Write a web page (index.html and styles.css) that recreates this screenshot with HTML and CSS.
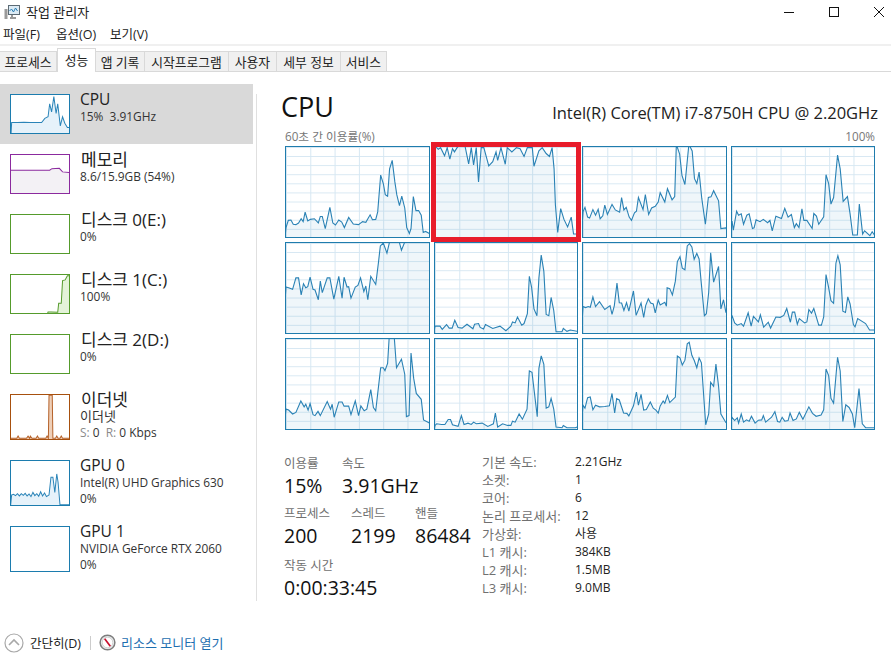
FILE: index.html
```html
<!DOCTYPE html>
<html lang="ko">
<head>
<meta charset="utf-8">
<title>작업 관리자</title>
<link rel="stylesheet" href="styles.css">
</head>
<body>
<div class="app">
  <header class="titlebar">
    <svg class="app-icon" viewBox="0 0 16 16"><rect x="0.5" y="5" width="3" height="10" fill="#9a9a9a"/><rect x="4.5" y="1.5" width="11" height="9" fill="#dcebf5" stroke="#5c6b75"/><path d="M5.5 7l2-2 2 3 2-4 2 3" fill="none" stroke="#2a7fb5"/><path d="M8 11v2M6 14h6" stroke="#7a7a7a" stroke-width="1.5"/></svg>
    <span class="app-title">작업 관리자</span>
    <div class="win-controls">
      <svg class="win-btn" viewBox="0 0 10 22"><path d="M0 11.5h10" stroke="#111" fill="none"/></svg>
      <svg class="win-btn" viewBox="0 0 10 22"><rect x="0.5" y="6.5" width="9" height="9" stroke="#111" fill="none"/></svg>
      <svg class="win-btn" viewBox="0 0 10 22"><path d="M0 6l10 10M10 6L0 16" stroke="#111" fill="none"/></svg>
    </div>
  </header>
  <nav class="menu"><span class="m1">파일(F)</span><span class="m2">옵션(O)</span><span>보기(V)</span></nav>
  <div class="tabs">
    <span class="tab t-proc">프로세스</span><span class="tab active t-perf">성능</span><span class="tab t-app">앱 기록</span><span class="tab t-start">시작프로그램</span><span class="tab t-user">사용자</span><span class="tab t-detail">세부 정보</span><span class="tab t-svc">서비스</span>
  </div>
  <main class="main">
    <aside class="sidebar">
      <div class="item selected">
        <svg class="thumb blue" viewBox="30 283 180 117" preserveAspectRatio="none"><polygon class="pl" points="32,368 50,368 70,367 90,368 110,368 125,368 135,355 145,350 150,310 156,335 163,288 170,340 175,310 183,378 190,350 197,370 205,383 215,383 215,500 25,500"/></svg>
        <div class="item-text"><div class="name">CPU</div><div class="sub">15%&nbsp; 3.91GHz</div></div>
      </div>
      <div class="item">
        <svg class="thumb purple" viewBox="30 43 180 117" preserveAspectRatio="none"><polygon class="pl" points="25,90 150,90 157,85 180,84 190,95 215,97 215,200 25,200"/></svg>
        <div class="item-text"><div class="name ko">메모리</div><div class="sub">8.6/15.9GB (54%)</div></div>
      </div>
      <div class="item">
        <svg class="thumb green" viewBox="30 223 180 117"></svg>
        <div class="item-text"><div class="name ko">디스크 0(E:)</div><div class="sub">0%</div></div>
      </div>
      <div class="item">
        <svg class="thumb green" viewBox="30 403 180 117" preserveAspectRatio="none"><polygon class="pl" points="145,517 155,517 175,518 178,490 186,490 190,420 198,418 205,405 215,405 215,560 130,560"/></svg>
        <div class="item-text"><div class="name ko">디스크 1(C:)</div><div class="sub">100%</div></div>
      </div>
      <div class="item">
        <svg class="thumb green" viewBox="30 583 180 117"></svg>
        <div class="item-text"><div class="name ko">디스크 2(D:)</div><div class="sub">0%</div></div>
      </div>
      <div class="item tall">
        <svg class="thumb tall-thumb orange" viewBox="30 27 180 136" preserveAspectRatio="none"><polygon class="pl" points="25,161 48,161 52,154 56,161 78,161 83,154 88,161 90,154 95,161 108,161 112,154 116,161 138,161 142,154 146,161 148,28 158,28 160,161 168,161 172,154 176,161 182,161 186,154 190,161 215,161 215,200 25,200"/></svg>
        <div class="item-text"><div class="name ko">이더넷</div><div class="sub ko-sub">이더넷</div><div class="sub"><span class="muted">S:</span> 0&nbsp; <span class="muted">R:</span> 0 Kbps</div></div>
      </div>
      <div class="item tall">
        <svg class="thumb tall-thumb blue" viewBox="30 225 180 136" preserveAspectRatio="none"><polygon class="pl" points="32,330 38,328 44,332 50,326 56,333 62,326 68,331 74,325 80,333 86,327 92,335 98,322 104,332 110,326 116,334 122,320 128,333 134,324 140,335 148,330 154,275 160,275 166,322 172,265 176,290 182,360 215,360 215,400 25,400"/></svg>
        <div class="item-text"><div class="name">GPU 0</div><div class="sub">Intel(R) UHD Graphics 630</div><div class="sub">0%</div></div>
      </div>
      <div class="item tall">
        <svg class="thumb tall-thumb blue" viewBox="30 423 180 136"></svg>
        <div class="item-text"><div class="name">GPU 1</div><div class="sub">NVIDIA GeForce RTX 2060</div><div class="sub">0%</div></div>
      </div>
    </aside>
    <section class="content">
      <div class="head"><h1>CPU</h1><span class="model">Intel(R) Core(TM) i7-8750H CPU @ 2.20GHz</span></div>
      <div class="axis"><span>60초 간 이용률(%)</span><span>100%</span></div>
      <div class="grid">
        <div class="cell"><svg viewBox="30 63 432 276" preserveAspectRatio="none"><polygon class="cl" points="30,310 37,288 45,287 52,300 60,301 68,296 76,283 82,292 88,263 96,290 104,285 116,283 128,296 134,276 140,276 149,313 163,248 172,296 180,302 190,287 199,293 207,310 220,279 234,299 250,301 262,292 272,294 285,271 292,286 302,285 308,262 317,149 325,175 331,209 338,214 344,130 352,104 360,170 366,210 374,243 381,214 390,250 396,310 404,328 409,313 416,215 424,258 432,258 440,272 446,325 453,322 462,327 999,700 -9,700"/></svg></div>
        <div class="cell"><svg viewBox="475 63 432 276" preserveAspectRatio="none"><polygon class="cl" points="475,60 485,70 492,65 504,90 512,65 520,100 528,68 534,78 542,65 550,55 565,55 577,115 585,65 592,118 600,65 607,170 615,65 623,65 638,121 650,108 660,78 665,104 675,65 688,116 694,65 708,78 722,65 733,68 745,92 755,65 770,65 775,122 790,75 800,65 812,83 822,92 830,65 836,130 840,240 847,325 856,252 866,285 877,308 888,278 895,330 907,330 1400,700 400,700"/></svg><div class="highlight"></div></div>
        <div class="cell"><svg viewBox="22 63 432 276" preserveAspectRatio="none"><polygon class="cl" points="22,262 28,248 36,278 42,281 52,255 60,272 68,254 74,283 82,274 88,241 96,270 110,239 120,256 133,263 139,218 146,256 153,248 162,278 169,288 178,265 184,260 190,218 204,255 211,209 221,270 230,250 241,245 250,232 256,203 270,232 278,191 292,225 300,215 305,55 315,85 322,150 331,178 343,55 353,75 360,160 367,175 374,140 382,220 393,300 402,218 410,216 418,197 433,228 440,313 455,311 999,700 -9,700"/></svg></div>
        <div class="cell"><svg viewBox="470 63 432 276" preserveAspectRatio="none"><polygon class="cl" points="470,290 474,318 484,260 490,272 498,268 505,300 515,272 522,268 532,313 537,311 543,286 555,292 565,285 578,295 585,288 592,320 603,275 620,282 630,251 640,278 650,270 659,310 665,298 673,310 682,253 688,288 697,288 713,313 718,267 726,275 733,300 748,277 755,148 763,175 770,238 778,218 790,88 798,130 807,230 820,215 828,268 836,333 850,333 856,238 866,330 872,320 888,335 895,323 902,333 1400,700 400,700"/></svg></div>
        <div class="cell"><svg viewBox="30 13 432 276" preserveAspectRatio="none"><polygon class="cl" points="30,148 38,150 50,155 60,120 68,120 76,172 83,138 90,150 96,147 103,118 112,155 118,157 128,187 134,130 140,165 155,120 163,120 175,185 190,115 200,182 206,118 215,148 220,147 227,182 240,148 248,143 256,120 266,162 272,145 278,187 287,115 302,140 310,75 316,22 325,13 336,44 345,5 372,5 380,35 392,5 470,5 999,700 -9,700"/></svg></div>
        <div class="cell"><svg viewBox="475 13 432 276" preserveAspectRatio="none"><polygon class="cl" points="475,268 490,268 497,278 510,263 518,274 527,274 535,250 545,272 557,274 572,262 590,276 595,262 607,260 612,272 622,277 628,263 650,275 672,268 690,282 705,268 710,255 718,258 725,240 738,265 745,260 755,230 761,115 768,150 775,215 784,236 790,120 797,50 805,100 812,232 820,236 827,180 835,220 842,285 860,285 864,275 875,284 885,280 907,284 1400,700 400,700"/></svg></div>
        <div class="cell"><svg viewBox="22 13 432 276" preserveAspectRatio="none"><polygon class="cl" points="22,208 30,211 38,208 44,210 52,178 60,208 72,193 88,217 104,205 110,232 117,205 125,136 132,196 139,197 146,220 154,196 161,222 175,160 183,235 198,197 206,241 212,205 220,184 227,197 235,200 241,227 250,188 256,203 270,195 275,207 277,150 285,153 293,172 302,130 308,70 316,55 323,90 331,95 338,22 345,15 352,25 359,63 367,45 374,62 380,130 390,236 396,230 403,165 409,43 418,133 433,85 440,215 448,187 455,225 999,700 -9,700"/></svg></div>
        <div class="cell"><svg viewBox="470 13 432 276" preserveAspectRatio="none"><polygon class="cl" points="470,235 478,258 486,265 498,260 505,268 519,227 528,268 535,238 550,255 556,233 566,271 580,256 587,274 603,240 616,241 627,235 636,214 647,256 653,225 660,225 668,262 674,245 690,258 697,255 703,217 711,228 718,214 733,265 741,265 748,240 755,110 763,150 770,190 778,198 785,75 791,52 798,80 806,222 814,226 821,178 828,200 838,263 843,270 851,245 875,260 887,280 902,280 1400,700 400,700"/></svg></div>
        <div class="cell"><svg viewBox="30 300 432 276" preserveAspectRatio="none"><polygon class="cl" points="30,515 38,518 50,530 60,525 75,490 85,508 90,500 97,518 103,498 112,532 118,535 127,522 134,535 155,492 165,515 170,500 176,540 190,493 200,493 206,506 220,506 227,532 240,490 250,535 257,505 267,520 275,515 287,455 295,510 302,520 317,388 325,388 330,397 338,375 343,292 358,292 365,388 380,362 390,408 395,538 403,535 409,343 417,420 425,467 440,485 447,548 462,556 999,900 -9,900"/></svg></div>
        <div class="cell"><svg viewBox="475 300 432 276" preserveAspectRatio="none"><polygon class="cl" points="475,565 480,560 495,562 505,562 515,547 522,547 528,563 545,568 555,535 563,562 575,558 585,562 592,555 600,560 618,558 635,568 652,560 658,527 665,570 680,560 695,565 705,565 710,552 718,555 730,530 740,546 754,515 761,398 769,402 785,538 790,390 797,352 805,378 812,512 820,508 827,482 835,515 842,570 860,572 864,565 875,572 900,572 907,570 1400,900 400,900"/></svg></div>
        <div class="cell"><svg viewBox="22 300 432 276" preserveAspectRatio="none"><polygon class="cl" points="22,503 28,512 36,480 44,478 52,517 60,503 72,508 88,507 102,505 110,467 118,527 124,483 132,487 145,527 155,528 161,536 175,505 184,463 190,503 198,470 206,518 214,516 226,493 235,512 243,518 250,527 256,505 265,490 270,497 278,473 285,495 302,478 308,352 316,358 323,380 331,365 338,315 344,310 352,350 359,365 367,388 374,358 381,373 394,563 403,530 409,433 418,445 425,377 433,445 440,530 455,556 999,900 -9,900"/></svg></div>
        <div class="cell"><svg viewBox="470 300 432 276" preserveAspectRatio="none"><polygon class="cl" points="470,540 478,550 486,542 490,558 498,530 505,555 514,548 522,552 529,537 540,558 550,549 560,548 565,535 572,555 590,540 600,523 608,553 615,555 622,540 630,552 640,550 646,527 655,550 665,545 674,525 685,546 703,508 714,528 725,537 740,533 748,517 755,392 763,412 770,482 778,497 790,356 798,398 806,553 815,502 825,510 835,530 842,572 855,452 865,560 875,572 902,572 1400,900 400,900"/></svg></div>
      </div>
      <div class="stats">
        <div class="stats-left">
          <div class="row r1">
            <div class="stat w58"><div class="label">이용률</div><div class="value">15%</div></div>
            <div class="stat"><div class="label">속도</div><div class="value">3.91GHz</div></div>
          </div>
          <div class="row r2">
            <div class="stat w67"><div class="label">프로세스</div><div class="value">200</div></div>
            <div class="stat w64"><div class="label">스레드</div><div class="value">2199</div></div>
            <div class="stat"><div class="label">핸들</div><div class="value">86484</div></div>
          </div>
          <div class="row r3">
            <div class="stat"><div class="label">작동 시간</div><div class="value">0:00:33:45</div></div>
          </div>
        </div>
        <dl class="specs">
          <dt>기본 속도:</dt><dd>2.21GHz</dd>
          <dt>소켓:</dt><dd>1</dd>
          <dt>코어:</dt><dd>6</dd>
          <dt>논리 프로세서:</dt><dd>12</dd>
          <dt>가상화:</dt><dd>사용</dd>
          <dt>L1 캐시:</dt><dd>384KB</dd>
          <dt>L2 캐시:</dt><dd>1.5MB</dd>
          <dt>L3 캐시:</dt><dd>9.0MB</dd>
        </dl>
      </div>
    </section>
  </main>
  <footer class="footer">
    <svg class="fewer" viewBox="0 0 20 20"><circle cx="10" cy="10" r="9" fill="#fff" stroke="#a8a8a8" stroke-width="1.2"/><path d="M5 12l5-5 5 5" fill="none" stroke="#a8a8a8" stroke-width="1.6"/></svg>
    <span class="fewer-text">간단히(D)</span>
    <span class="sep"></span>
    <svg class="monitor" viewBox="0 0 18 18"><circle cx="9" cy="9" r="7.8" fill="#eceff0" stroke="#7d7d7d" stroke-width="1.6"/><circle cx="9" cy="9" r="5.6" fill="#fff" stroke="#b5b5b5" stroke-width=".6"/><path d="M6 5l6 8" stroke="#c8102e" stroke-width="1.8"/></svg>
    <span class="link">리소스 모니터 열기</span>
  </footer>
</div>
</body>
</html>
```
FILE: styles.css
```css
* { box-sizing: border-box; margin: 0; padding: 0; }
html, body { background: #fff; }
body { font-family: "Open Sans", "Noto Sans CJK KR", sans-serif; color: #1a1a1a; overflow: hidden; }
.app { width: 891px; height: 658px; display: flex; flex-direction: column; }

.titlebar { height: 23px; display: flex; align-items: center; padding-left: 4px; flex: none; }
.app-icon { width: 16px; height: 16px; margin-right: 6px; }
.app-title { font-size: 13px; color: #222; }
.win-controls { margin-left: auto; display: flex; gap: 35px; padding-right: 7px; }
.win-btn { width: 10px; height: 22px; display: block; }

.menu { height: 23px; display: flex; align-items: center; padding-left: 3px; font-size: 12.5px; flex: none; color: #222; border-bottom: 2px solid #f0f0f0; }
.m1 { width: 53px; }
.m2 { width: 54px; }

.tabs { height: 26px; display: flex; align-items: flex-end; flex: none; border-bottom: 1px solid #d9d9d9; font-size: 12.8px; color: #222; }
.tab { height: 20px; padding-bottom: 1px; background: #f0f0f0; border: 1px solid #d9d9d9; border-bottom: 0; border-left: 0; display: flex; align-items: center; justify-content: center; flex: none; }
.tab.active { height: 24px; background: #fff; border-left: 1px solid #d9d9d9; margin-bottom: -1px; padding-bottom: 2px; }
.t-proc { width: 57px; } .t-perf { width: 39px; } .t-app { width: 49px; } .t-start { width: 84px; }
.t-user { width: 48px; } .t-detail { width: 64px; } .t-svc { width: 46px; }

.main { display: flex; flex: 1; min-height: 0; }
.sidebar { width: 256px; padding-top: 12px; flex: none; }
.item { width: 253px; height: 60px; padding: 10px 0 0 10px; display: flex; }
.item.selected { background: #d9d9d9; }
.item.tall { height: 66px; }
.thumb { width: 60px; height: 40px; flex: none; border: 1px solid; background: #fff; display: block; }
.tall-thumb { height: 46px; }
.blue { border-color: #1c7cae; --line: #2a84b8; --fill: #e6f2fa; }
.purple { border-color: #8b2a9e; --line: #8b2a9e; --fill: #f3f1f5; }
.green { border-color: #559b2c; --line: #559b2c; --fill: #e4f3d9; }
.orange { border-color: #a7500e; --line: #b5622a; --fill: #eecfb8; }
.pl { fill: var(--fill); stroke: var(--line); stroke-width: 1; vector-effect: non-scaling-stroke; }
.item-text { margin-left: 10px; margin-top: -4px; }
.name { font-size: 15.5px; line-height: 19px; color: #222; white-space: nowrap; }
.name.ko { font-size: 17px; margin-left: 1px; padding-top: 1px; line-height: 18px; }
.sub { font-size: 11.9px; line-height: 15.5px; color: #333; white-space: nowrap; }
.ko-sub { font-size: 13px; }
.muted { color: #8a8a8a; }

.content { flex: 1; border-left: 1px solid #e0e0e0; margin-top: 22px; margin-bottom: 28px; padding-left: 24px; min-width: 0; }
.head { display: flex; justify-content: space-between; align-items: flex-end; width: 597px; height: 30px; margin-top: -1px; }
h1 { font-weight: 400; font-size: 27px; line-height: 32px; color: #111; }
.model { font-size: 16.5px; line-height: 20px; color: #222; }
.axis { display: flex; justify-content: space-between; width: 590px; margin-left: 4px; margin-top: 6px; font-size: 11.7px; line-height: 14px; color: #777; height: 17px; }

.grid { width: 590px; margin-left: 4px; display: grid; grid-template-columns: repeat(4, 144.5px); grid-auto-rows: 92px; gap: 4px; }
.cell { position: relative; border: 1px solid #1f7cad; background-color: #fff; background-image: linear-gradient(to right, #d6e7f2 1px, transparent 1px), linear-gradient(to bottom, #d6e7f2 1px, transparent 1px); background-size: 24.3px 100%, 100% 9.1px; }
.cell svg { width: 100%; height: 100%; display: block; }
.cl { fill: #117dbb; fill-opacity: .065; stroke: #2a82b5; stroke-width: 1.1; stroke-linejoin: miter; vector-effect: non-scaling-stroke; }
.highlight { position: absolute; left: -4px; top: -5px; width: 150px; height: 100px; border: 5px solid #e81c2b; }

.stats { display: flex; width: 590px; margin-top: 27px; margin-left: 3px; }
.stats-left { width: 198px; flex: none; }
.row { display: flex; height: 50px; }
.r3 { margin-top: 2px; }
.w58 { width: 58px; } .w67 { width: 67px; } .w64 { width: 64px; }
.label { font-size: 12.5px; line-height: 14px; color: #707070; }
.value { font-size: 19.5px; line-height: 26px; margin-top: 2px; color: #111; white-space: nowrap; }
.specs { display: grid; grid-template-columns: 93px auto; grid-auto-rows: 18px; font-size: 12px; line-height: 18px; margin-top: -4px; }
dt { color: #707070; font-size: 13px; white-space: nowrap; }
dd { color: #222; }

.footer { height: 27px; flex: none; display: flex; align-items: center; padding-left: 4px; margin-bottom: 2px; font-size: 12.5px; }
.fewer { width: 20px; height: 20px; flex: none; }
.fewer-text { margin-left: 6px; width: 52px; color: #222; white-space: nowrap; }
.sep { width: 1px; height: 14px; background: #ccc; margin-left: 8px; }
.monitor { width: 17px; height: 17px; margin-left: 8px; flex: none; }
.link { margin-left: 5px; color: #1c6eb0; font-size: 13px; }
```
